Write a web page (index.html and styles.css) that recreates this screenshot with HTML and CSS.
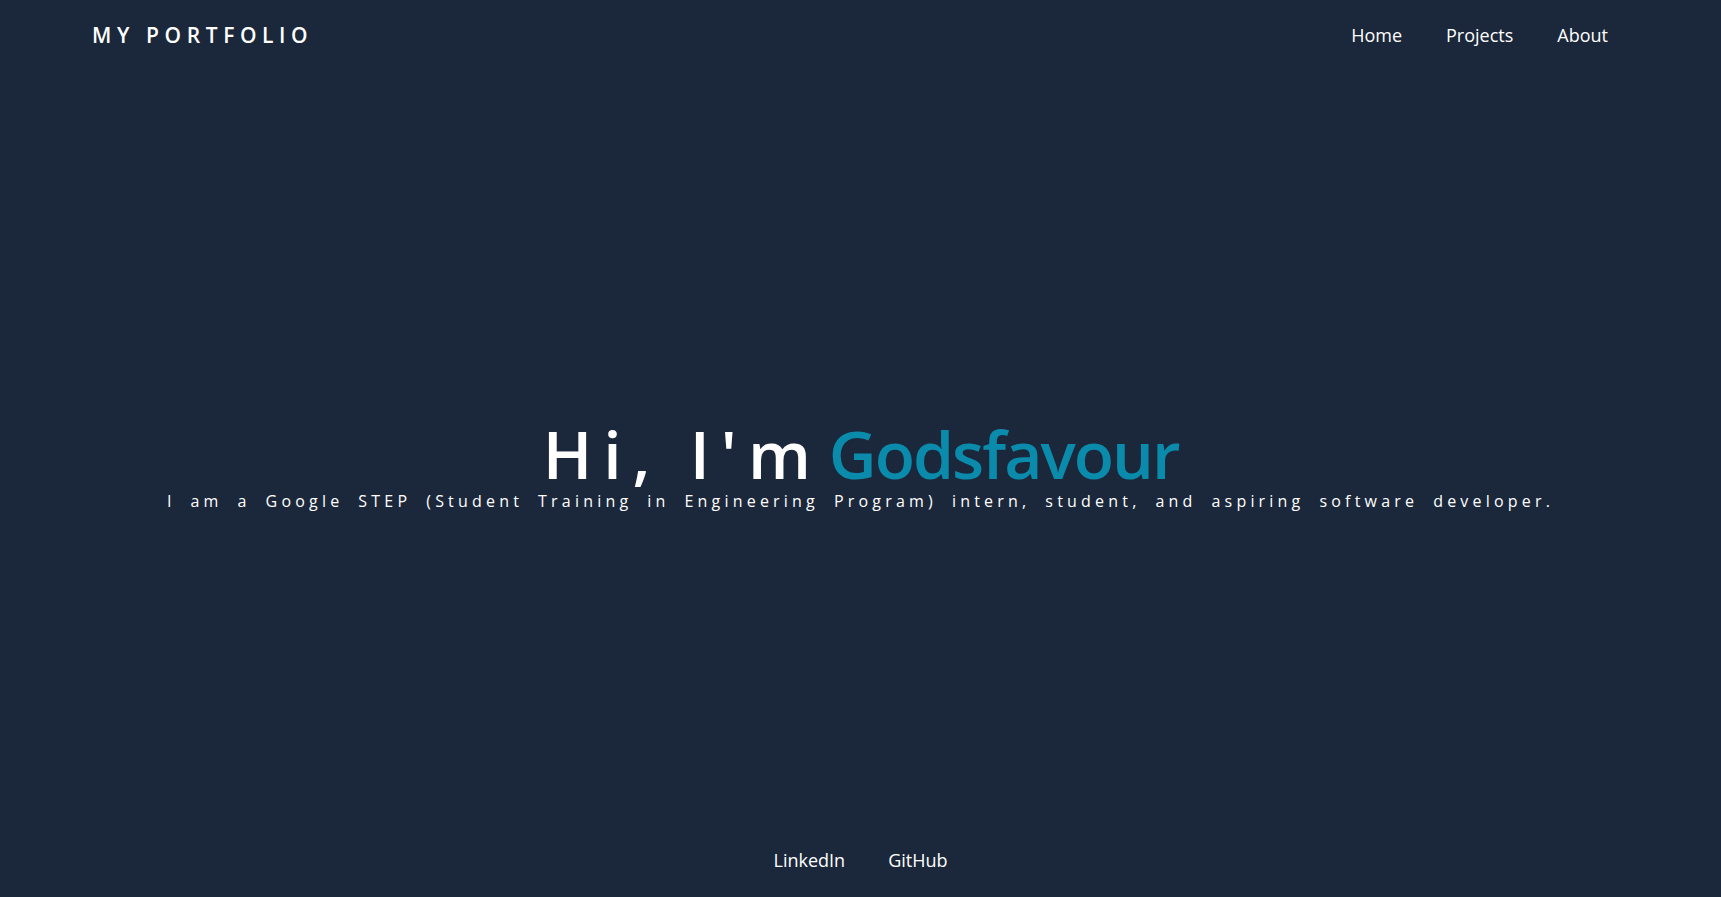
FILE: index.html
```html
<!DOCTYPE html>
<html lang="en">
<head>
<meta charset="utf-8">
<title>My Portfolio</title>
<link rel="stylesheet" href="styles.css">
</head>
<body>
<div class="page">
  <header class="header">
    <div class="logo">MY PORTFOLIO</div>
    <nav class="nav">
      <a href="#">Home</a>
      <a href="#">Projects</a>
      <a href="#">About</a>
    </nav>
  </header>
  <main class="hero">
    <h1 class="title"><span class="hi">Hi, I'm</span><span class="name">Godsfavour</span></h1>
    <p class="subtitle">I am a Google STEP (Student Training in Engineering Program) intern, student, and aspiring software developer.</p>
  </main>
  <footer class="footer">
    <a href="#">LinkedIn</a>
    <a href="#">GitHub</a>
  </footer>
</div>
</body>
</html>
```
FILE: styles.css
```css
html, body {
  margin: 0;
  padding: 0;
  background: #1b273a;
}
body {
  font-family: "Open Sans", "DejaVu Sans", sans-serif;
  color: #ffffff;
}
a {
  color: #ffffff;
  text-decoration: none;
}
.page {
  min-height: 100vh;
  display: flex;
  flex-direction: column;
}
.header {
  display: flex;
  justify-content: space-between;
  align-items: center;
  height: 70px;
  padding: 0 113px 0 92px;
}
.logo {
  font-size: 21px;
  font-weight: 600;
  letter-spacing: 5.6px;
}
.nav {
  display: flex;
  gap: 44px;
  font-size: 18px;
}
.hero {
  flex: 1;
  display: flex;
  flex-direction: column;
  align-items: center;
  justify-content: center;
  padding-top: 36px;
}
.title {
  margin: 0;
  font-size: 66px;
  font-weight: 600;
  line-height: 1.1;
}
.hi {
  letter-spacing: 11px;
}
.name {
  color: #0b8bab;
  letter-spacing: -2px;
  margin-left: 7px;
}
.subtitle {
  margin: 0;
  font-size: 16px;
  letter-spacing: 4.2px;
  word-spacing: 6.6px;
}
.footer {
  display: flex;
  justify-content: center;
  gap: 43px;
  font-size: 18px;
  height: 74px;
  align-items: center;
}
```
